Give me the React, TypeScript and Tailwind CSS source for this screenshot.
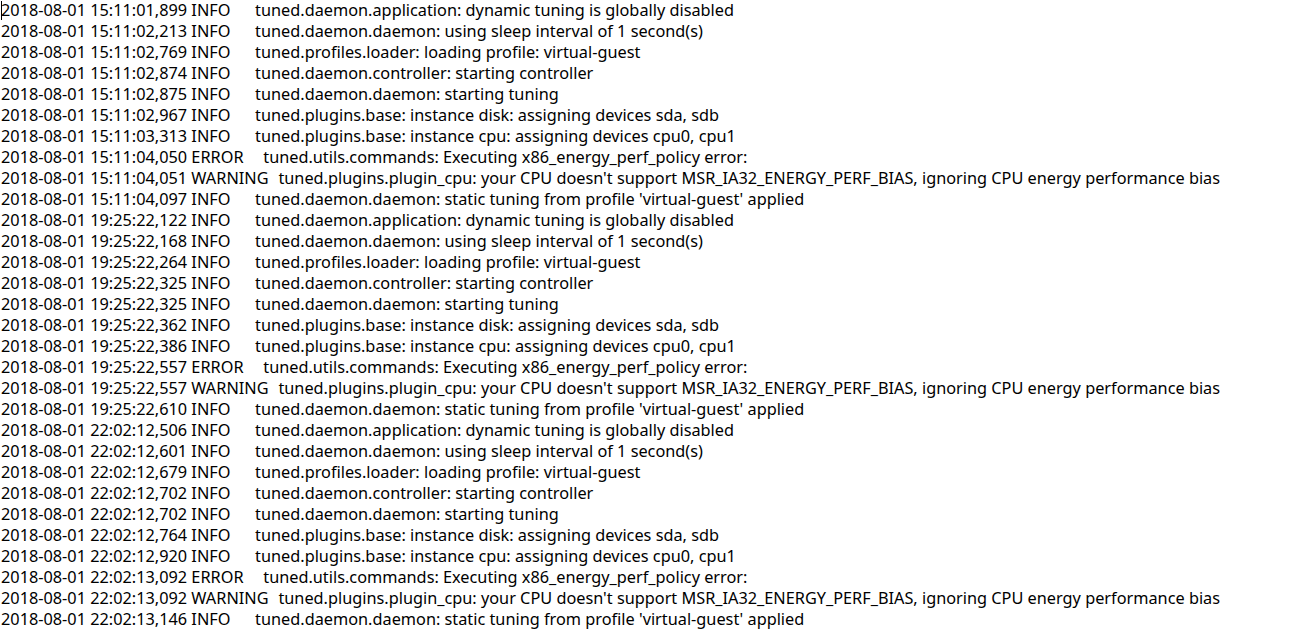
const lines = [
  '2018-08-01 15:11:01,899 INFO     tuned.daemon.application: dynamic tuning is globally disabled',
  '2018-08-01 15:11:02,213 INFO     tuned.daemon.daemon: using sleep interval of 1 second(s)',
  '2018-08-01 15:11:02,769 INFO     tuned.profiles.loader: loading profile: virtual-guest',
  '2018-08-01 15:11:02,874 INFO     tuned.daemon.controller: starting controller',
  '2018-08-01 15:11:02,875 INFO     tuned.daemon.daemon: starting tuning',
  '2018-08-01 15:11:02,967 INFO     tuned.plugins.base: instance disk: assigning devices sda, sdb',
  '2018-08-01 15:11:03,313 INFO     tuned.plugins.base: instance cpu: assigning devices cpu0, cpu1',
  '2018-08-01 15:11:04,050 ERROR    tuned.utils.commands: Executing x86_energy_perf_policy error:',
  "2018-08-01 15:11:04,051 WARNING  tuned.plugins.plugin_cpu: your CPU doesn't support MSR_IA32_ENERGY_PERF_BIAS, ignoring CPU energy performance bias",
  "2018-08-01 15:11:04,097 INFO     tuned.daemon.daemon: static tuning from profile 'virtual-guest' applied",
  '2018-08-01 19:25:22,122 INFO     tuned.daemon.application: dynamic tuning is globally disabled',
  '2018-08-01 19:25:22,168 INFO     tuned.daemon.daemon: using sleep interval of 1 second(s)',
  '2018-08-01 19:25:22,264 INFO     tuned.profiles.loader: loading profile: virtual-guest',
  '2018-08-01 19:25:22,325 INFO     tuned.daemon.controller: starting controller',
  '2018-08-01 19:25:22,325 INFO     tuned.daemon.daemon: starting tuning',
  '2018-08-01 19:25:22,362 INFO     tuned.plugins.base: instance disk: assigning devices sda, sdb',
  '2018-08-01 19:25:22,386 INFO     tuned.plugins.base: instance cpu: assigning devices cpu0, cpu1',
  '2018-08-01 19:25:22,557 ERROR    tuned.utils.commands: Executing x86_energy_perf_policy error:',
  "2018-08-01 19:25:22,557 WARNING  tuned.plugins.plugin_cpu: your CPU doesn't support MSR_IA32_ENERGY_PERF_BIAS, ignoring CPU energy performance bias",
  "2018-08-01 19:25:22,610 INFO     tuned.daemon.daemon: static tuning from profile 'virtual-guest' applied",
  '2018-08-01 22:02:12,506 INFO     tuned.daemon.application: dynamic tuning is globally disabled',
  '2018-08-01 22:02:12,601 INFO     tuned.daemon.daemon: using sleep interval of 1 second(s)',
  '2018-08-01 22:02:12,679 INFO     tuned.profiles.loader: loading profile: virtual-guest',
  '2018-08-01 22:02:12,702 INFO     tuned.daemon.controller: starting controller',
  '2018-08-01 22:02:12,702 INFO     tuned.daemon.daemon: starting tuning',
  '2018-08-01 22:02:12,764 INFO     tuned.plugins.base: instance disk: assigning devices sda, sdb',
  '2018-08-01 22:02:12,920 INFO     tuned.plugins.base: instance cpu: assigning devices cpu0, cpu1',
  '2018-08-01 22:02:13,092 ERROR    tuned.utils.commands: Executing x86_energy_perf_policy error:',
  "2018-08-01 22:02:13,092 WARNING  tuned.plugins.plugin_cpu: your CPU doesn't support MSR_IA32_ENERGY_PERF_BIAS, ignoring CPU energy performance bias",
  "2018-08-01 22:02:13,146 INFO     tuned.daemon.daemon: static tuning from profile 'virtual-guest' applied",
];

// split "date time LEVEL<pad>message" so the padding can be widened a little
function LogLine({ line }: { line: string }) {
  const m = line.match(/^(\S+ \S+ \S+)( +)(.*)$/);
  if (!m) return <div className="whitespace-pre">{line}</div>;
  return (
    <div className="whitespace-pre">
      {m[1]}
      <span className="[word-spacing:0.7px]">{m[2]}</span>
      {m[3]}
    </div>
  );
}

export default function App() {
  return (
    <div className="w-[1308px] h-[633px] overflow-hidden bg-white text-black">
      <div className="relative pl-[1px] font-['Noto_Sans',sans-serif] text-[16.3px] leading-[21px]">
        {/* text cursor */}
        <div className="absolute left-[1px] top-[1px] w-[1px] h-[19px] bg-black" />
        {lines.map((line, i) => (
          <LogLine key={i} line={line} />
        ))}
      </div>
    </div>
  );
}
